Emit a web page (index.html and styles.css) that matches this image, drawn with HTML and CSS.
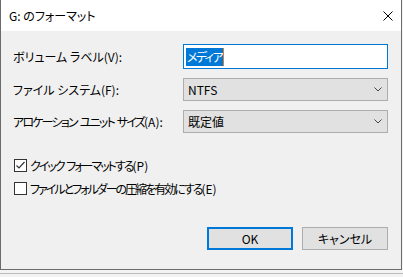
FILE: index.html
```html
<!DOCTYPE html>
<html lang="ja">
<head>
<meta charset="utf-8">
<link rel="stylesheet" href="styles.css">
</head>
<body>
<div class="window">
  <div class="titlebar">
    <span class="title">G: のフォーマット</span>
    <svg class="close" width="10" height="10" viewBox="0 0 10 10"><path d="M0.5 0.5 L9.5 9.5 M9.5 0.5 L0.5 9.5" stroke="#000" stroke-width="1" fill="none"/></svg>
  </div>
  <div class="body">
    <div class="form">
      <label class="label">ボリューム ラベル(V):</label>
      <div class="input"><span class="sel">メディア</span><span class="caret"></span></div>
      <label class="label">ファイル システム(F):</label>
      <div class="select"><span>NTFS</span><svg class="chev" width="8" height="5" viewBox="0 0 8 5"><path d="M0.5 0.5 L4 4 L7.5 0.5" stroke="#444" fill="none"/></svg></div>
      <label class="label tight">アロケーション ユニット サイズ<span class="l">(A):</span></label>
      <div class="select"><span>既定値</span><svg class="chev" width="8" height="5" viewBox="0 0 8 5"><path d="M0.5 0.5 L4 4 L7.5 0.5" stroke="#444" fill="none"/></svg></div>
    </div>
    <div class="checks">
      <div class="check"><span class="box"><svg width="11" height="11" viewBox="0 0 11 11"><path d="M1.5 5.5 L4 8 L9.5 2" stroke="#333" stroke-width="1.2" fill="none"/></svg></span><span class="ctext">クイック フォーマットする<span class="l">(P)</span></span></div>
      <div class="check"><span class="box"></span><span class="ctext">ファイルとフォルダーの圧縮を有効にする<span class="l">(E)</span></span></div>
    </div>
    <div class="buttons">
      <div class="btn primary">OK</div>
      <div class="btn">キャンセル</div>
    </div>
  </div>
</div>
<div class="below"></div>
</body>
</html>
```
FILE: styles.css
```css
html, body {
  margin: 0;
  padding: 0;
}
body {
  width: 403px;
  height: 277px;
  background: #f3f3f3;
  font-family: "Noto Sans CJK JP", "Noto Sans", sans-serif;
  font-size: 12px;
  font-feature-settings: "palt";
  color: #000;
  overflow: hidden;
}
.window {
  width: 400px;
  height: 269px;
  border-left: 1px solid #6b6b6b;
  border-right: 1px solid #6b6b6b;
  border-bottom: 1px solid #6b6b6b;
  display: flex;
  flex-direction: column;
  background: #f0f0f0;
}
.titlebar {
  height: 31px;
  background: #fff;
  display: flex;
  align-items: center;
  justify-content: space-between;
  padding-left: 8px;
  padding-right: 8px;
  box-sizing: border-box;
  flex: none;
}
.title {
  line-height: 16px;
}
.body {
  padding: 13px 12px 0 12px;
  display: flex;
  flex-direction: column;
}
.form {
  display: grid;
  grid-template-columns: 170px 205px;
  row-gap: 9px;
  align-items: center;
}
.label {
  line-height: 16px;
  white-space: nowrap;
}
.label.tight {
  letter-spacing: -1.8px;
  word-spacing: 2px;
}
.l {
  letter-spacing: 0;
}
.input {
  height: 25px;
  box-sizing: border-box;
  border: 1px solid #0078d7;
  background: #fff;
  display: flex;
  align-items: center;
  padding-left: 2px;
}
.sel {
  background: #0078d7;
  color: #fff;
  line-height: 18px;
  padding: 0 1px;
  letter-spacing: -1.6px;
}
.caret {
  width: 1px;
  height: 18px;
  background: #e87a1e;
}
.select {
  height: 23px;
  box-sizing: border-box;
  border: 1px solid #adadad;
  background: #e1e1e1;
  display: flex;
  align-items: center;
  justify-content: space-between;
  padding-left: 4px;
  padding-right: 5px;
  line-height: 16px;
}
.checks {
  margin-top: 21px;
  display: flex;
  flex-direction: column;
}
.check {
  height: 23px;
  display: flex;
  align-items: center;
  gap: 3px;
  padding-left: 1px;
  line-height: 16px;
}
.ctext {
  letter-spacing: -2px;
  word-spacing: 2px;
  white-space: nowrap;
}
.box {
  width: 13px;
  height: 13px;
  box-sizing: border-box;
  border: 1px solid #333;
  background: #fff;
  display: flex;
  align-items: center;
  justify-content: center;
  flex: none;
}
.buttons {
  margin-top: 27px;
  display: flex;
  justify-content: flex-end;
  gap: 9px;
  padding-right: 1px;
}
.btn {
  width: 86px;
  height: 23px;
  box-sizing: border-box;
  border: 1px solid #adadad;
  background: #e1e1e1;
  display: flex;
  align-items: center;
  justify-content: center;
  line-height: 16px;
}
.btn.primary {
  border: 2px solid #0078d7;
}
.below {
  height: 7px;
  background: linear-gradient(#f3f3f3 0 3px, #bcbcbc 3px 4px, #f3f3f3 4px);
}
```
